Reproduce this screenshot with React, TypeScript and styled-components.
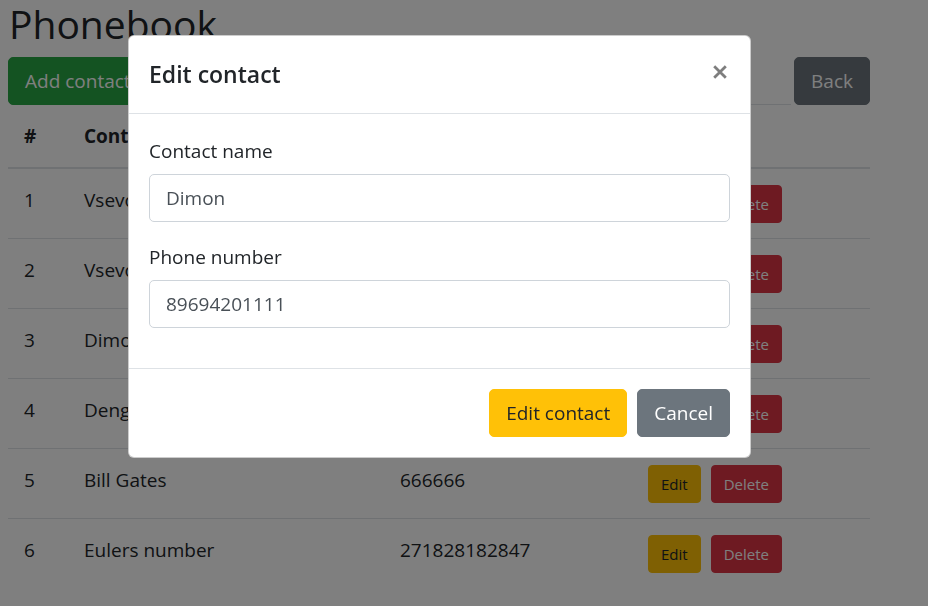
import React from "react";
import styled, { createGlobalStyle, css } from "styled-components";

const GlobalStyle = createGlobalStyle`
  html, body { margin: 0; padding: 0; }
  body {
    font-family: "Open Sans", "Noto Sans", sans-serif;
    color: #212529;
    background: #fff;
  }
  * { box-sizing: border-box; }
`;

const Page = styled.div`
  width: 878px;
  padding: 0 8px;
`;

const Title = styled.h1`
  margin: 0 0 9px;
  font-size: 39px;
  font-weight: 400;
  line-height: 48px;
  padding-left: 1px;
`;

const Toolbar = styled.div`
  display: flex;
  align-items: stretch;
  height: 48px;
`;

type Variant = "success" | "secondary" | "warning" | "danger";
const palette: Record<Variant, { bg: string; fg: string }> = {
  success: { bg: "#28a745", fg: "#fff" },
  secondary: { bg: "#6c757d", fg: "#fff" },
  warning: { bg: "#ffc107", fg: "#212529" },
  danger: { bg: "#dc3545", fg: "#fff" },
};

const Button = styled.button<{ $variant: Variant; $lg?: boolean }>`
  font-family: inherit;
  font-weight: 400;
  border: 1px solid ${(p) => palette[p.$variant].bg};
  background: ${(p) => palette[p.$variant].bg};
  color: ${(p) => palette[p.$variant].fg};
  white-space: nowrap;
  cursor: pointer;
  ${(p) =>
    p.$lg
      ? css`
          font-size: 19px;
          line-height: 30px;
          padding: 8px 16px;
          border-radius: 5px;
        `
      : css`
          font-size: 15px;
          line-height: 24px;
          padding: 6px 12px;
          border-radius: 4px;
        `}
`;

const Search = styled.input`
  flex: 1;
  min-width: 0;
  margin: 0 3px 0 10px;
  border: none;
  border-bottom: 1px solid #dee2e6;
  background: transparent;
  font-family: inherit;
  font-size: 19px;
  outline: none;
`;

const Table = styled.table`
  width: 862px;
  border-collapse: collapse;
  table-layout: fixed;
  font-size: 19px;
  line-height: 30px;
`;

const Th = styled.th`
  text-align: left;
  font-weight: 700;
  padding: 16px;
  border-bottom: 2px solid #dee2e6;
  vertical-align: bottom;
`;

const Td = styled.td`
  padding: 16px 16px 15px;
  border-top: 1px solid #dee2e6;
  vertical-align: top;
`;

const Actions = styled.div`
  display: flex;
  gap: 10px;
`;

const Backdrop = styled.div`
  position: fixed;
  inset: 0;
  background: rgba(0, 0, 0, 0.5);
`;

const Modal = styled.div`
  position: absolute;
  left: 128px;
  top: 35px;
  width: 623px;
  background: #fff;
  border: 1px solid rgba(0, 0, 0, 0.2);
  border-radius: 6px;
  display: flex;
  flex-direction: column;
`;

const ModalHeader = styled.div`
  display: flex;
  align-items: center;
  justify-content: space-between;
  padding: 20px 23px 21px 20px;
  border-bottom: 1px solid #dee2e6;
`;

const ModalTitle = styled.h4`
  margin: 0;
  font-size: 23px;
  font-weight: 600;
  line-height: 36px;
`;

const Close = styled.button`
  border: none;
  background: transparent;
  padding: 0;
  width: 14px;
  height: 14px;
  margin-top: -5px;
  opacity: 0.5;
  display: flex;
  cursor: pointer;
`;

const ModalBody = styled.div`
  padding: 22px 20px 20px;
  display: flex;
  flex-direction: column;
`;

const Field = styled.div`
  display: flex;
  flex-direction: column;
  margin-bottom: 20px;
`;

const Label = styled.label`
  font-size: 19px;
  line-height: 30px;
  margin-bottom: 8px;
`;

const Input = styled.input`
  height: 48px;
  padding: 8px 16px;
  font-family: inherit;
  font-size: 19px;
  line-height: 30px;
  color: #495057;
  border: 1px solid #ced4da;
  border-radius: 5px;
  outline: none;
`;

const ModalFooter = styled.div`
  display: flex;
  justify-content: flex-end;
  gap: 10px;
  padding: 20px;
  border-top: 1px solid #dee2e6;
`;

const contacts = [
  { id: 1, name: "Vsevolod", phone: "89001234567" },
  { id: 2, name: "Vsevolod Jr", phone: "89007654321" },
  { id: 3, name: "Dimon", phone: "89694201111" },
  { id: 4, name: "Deng Xiaoping", phone: "88005553535" },
  { id: 5, name: "Bill Gates", phone: "666666" },
  { id: 6, name: "Eulers number", phone: "271828182847" },
];

export default function App() {
  return (
    <>
      <GlobalStyle />
      <Page>
        <Title>Phonebook</Title>
        <Toolbar>
          <Button $variant="success" $lg>
            Add contact
          </Button>
          <Search placeholder="" />
          <Button $variant="secondary" $lg>
            Back
          </Button>
        </Toolbar>
        <Table>
          <colgroup>
            <col style={{ width: 60 }} />
            <col style={{ width: 316 }} />
            <col style={{ width: 248 }} />
            <col style={{ width: 238 }} />
          </colgroup>
          <thead>
            <tr>
              <Th>#</Th>
              <Th>Contact name</Th>
              <Th>Phone number</Th>
              <Th>Actions</Th>
            </tr>
          </thead>
          <tbody>
            {contacts.map((c) => (
              <tr key={c.id}>
                <Td>{c.id}</Td>
                <Td>{c.name}</Td>
                <Td>{c.phone}</Td>
                <Td>
                  <Actions>
                    <Button $variant="warning">Edit</Button>
                    <Button $variant="danger">Delete</Button>
                  </Actions>
                </Td>
              </tr>
            ))}
          </tbody>
        </Table>
      </Page>
      <Backdrop>
        <Modal>
          <ModalHeader>
            <ModalTitle>Edit contact</ModalTitle>
            <Close aria-label="Close">
              <svg width="14" height="14" viewBox="0 0 14 14">
                <path d="M1.2 1.2 L12.8 12.8 M12.8 1.2 L1.2 12.8" stroke="#000" strokeWidth="2.8" />
              </svg>
            </Close>
          </ModalHeader>
          <ModalBody>
            <Field>
              <Label>Contact name</Label>
              <Input defaultValue="Dimon" />
            </Field>
            <Field>
              <Label>Phone number</Label>
              <Input defaultValue="89694201111" />
            </Field>
          </ModalBody>
          <ModalFooter>
            <Button $variant="warning" $lg>
              Edit contact
            </Button>
            <Button $variant="secondary" $lg>
              Cancel
            </Button>
          </ModalFooter>
        </Modal>
      </Backdrop>
    </>
  );
}
